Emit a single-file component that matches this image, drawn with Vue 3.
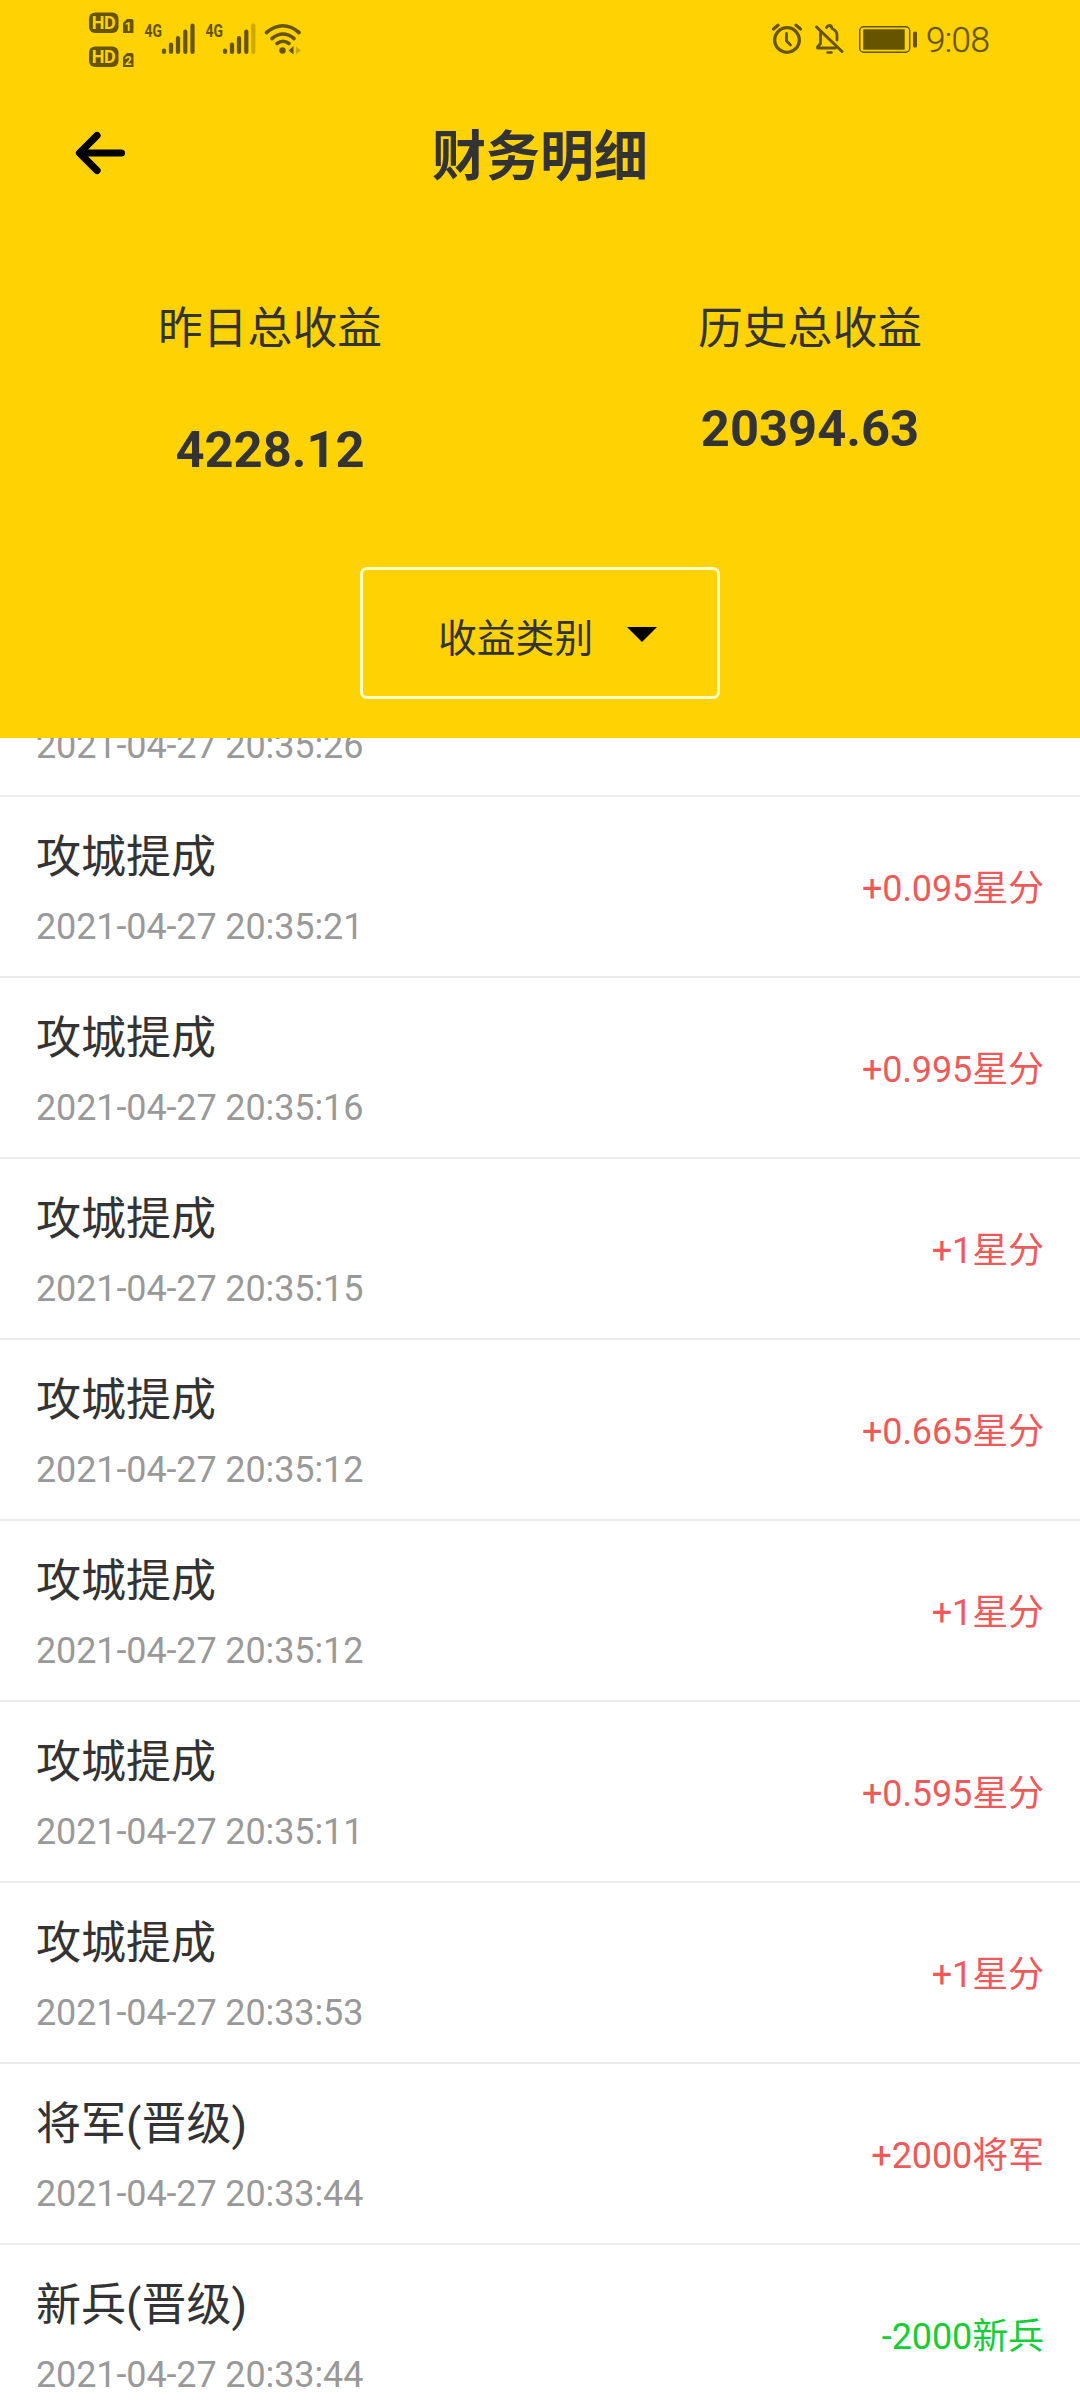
<script setup>
const stats = [
  { label: '昨日总收益', value: '4228.12', low: true },
  { label: '历史总收益', value: '20394.63', low: false },
]

const records = [
  { title: '攻城提成', time: '2021-04-27 20:35:21', amount: '+0.095星分' },
  { title: '攻城提成', time: '2021-04-27 20:35:16', amount: '+0.995星分' },
  { title: '攻城提成', time: '2021-04-27 20:35:15', amount: '+1星分' },
  { title: '攻城提成', time: '2021-04-27 20:35:12', amount: '+0.665星分' },
  { title: '攻城提成', time: '2021-04-27 20:35:12', amount: '+1星分' },
  { title: '攻城提成', time: '2021-04-27 20:35:11', amount: '+0.595星分' },
  { title: '攻城提成', time: '2021-04-27 20:33:53', amount: '+1星分' },
  { title: '将军(晋级)', time: '2021-04-27 20:33:44', amount: '+2000将军' },
  { title: '新兵(晋级)', time: '2021-04-27 20:33:44', amount: '-2000新兵' },
]
</script>

<template>
  <div class="screen">
    <header class="header">
      <div class="status">
        <svg viewBox="0 0 250 80" width="250" height="80">
          <g fill="#665400">
            <rect x="19" y="12.5" width="29.5" height="20.5" rx="6" />
            <path d="M53 23l4-4h4.500q2 0 2 2v12H53z" />
            <rect x="19" y="46.500" width="29.5" height="20.5" rx="6" />
            <path d="M53 57l4-4h4.500q2 0 2 2v12H53z" />
          </g>
          <g class="hd" fill="#ffd204" text-anchor="middle">
            <text x="33.7" y="29.300" textLength="24">HD</text>
            <text x="33.7" y="63.300" textLength="24">HD</text>
            <text x="58.2" y="31" class="sim">1</text>
            <text x="58.200" y="65" class="sim">2</text>
          </g>
          <g class="net" fill="#665400">
            <text x="74.500" y="37" textLength="17.500" lengthAdjust="spacingAndGlyphs">4G</text>
            <text x="135.500" y="37" textLength="17.500" lengthAdjust="spacingAndGlyphs">4G</text>
          </g>
          <g stroke="#665400" stroke-width="4.200" stroke-linecap="round">
            <path d="M94 50.500v1.500M101 44.500v7.500M108 38v14M115.300 31.500v20.500M122.500 25.500v26.500" />
            <path d="M155 50.500v1.500M162 44.500v7.500M169 38v14M176.300 31.500v20.500" />
            <path d="M183.300 25.500v26.500" stroke="#ccaa03" />
          </g>
          <g fill="none" stroke="#665400" stroke-width="3.600" stroke-linecap="round">
            <path d="M196.500 32.500Q213 19 229 32.500" />
            <path d="M202 38.500Q213 29.500 224 38.500" />
            <path d="M207 43.500Q213 39 219 43.500" />
          </g>
          <circle cx="212.500" cy="50.500" r="3.200" fill="#665400" />
          <path d="M223.500 46v8.500l-5-4z" fill="#665400" />
          <path d="M226 46.500v8l5-4z" fill="#ccaa03" />
        </svg>
        <div class="status-right">
          <svg viewBox="0 0 150 80" width="150" height="80">
            <g fill="none" stroke="#665400" stroke-width="3.300" stroke-linecap="round" stroke-linejoin="round">
              <circle cx="17" cy="40" r="12.300" />
              <path d="M3.500 29l4.500-3.700M30.500 29l-4.500-3.700" />
              <path d="M16.500 33.500v7.500l4 4" stroke-width="2.800" />
              <path d="M46.500 27l25.500 24.500" stroke-width="3" />
              <path d="M50.500 33v10.500l-3 3.500v1h18M56.500 27.500q1-2 3-2t2.500 3q5 2 5 7v4.500" stroke-width="2.800" />
              <path d="M57.500 52.500h4" stroke-width="2.500" />
            </g>
            <rect x="89.700" y="26.700" width="50" height="25.600" rx="4" fill="none" stroke="#665400" stroke-width="1.400" />
            <rect x="93.200" y="29.300" width="41.500" height="20.400" fill="#665400" />
            <rect x="143" y="31.500" width="4" height="16" rx="1.500" fill="#665400" />
          </svg>
          <span class="clock">9:08</span>
        </div>
      </div>

      <div class="nav">
        <svg class="back" viewBox="0 0 50 44" width="50" height="44">
          <path d="M22 4.500L4.500 22L22 39.500M6 22H46.500" fill="none" stroke="#000" stroke-width="7.200" stroke-linecap="round" stroke-linejoin="round" />
        </svg>
        <h1>财务明细</h1>
      </div>

      <div class="stats">
        <div v-for="s in stats" :key="s.label" class="stat">
          <div class="label">{{ s.label }}</div>
          <div class="value" :class="{ low: s.low }">{{ s.value }}</div>
        </div>
      </div>

      <button class="filter">
        <span>收益类别</span>
        <svg viewBox="0 0 30 15" width="30" height="15"><path d="M0 0h30L15 15z" /></svg>
      </button>
    </header>

    <main class="list">
      <div class="row partial">
        <div class="time">2021-04-27 20:35:26</div>
      </div>
      <div v-for="(r, i) in records" :key="i" class="row">
        <div class="info">
          <div class="title">{{ r.title }}</div>
          <div class="time">{{ r.time }}</div>
        </div>
        <div class="amount" :class="{ minus: r.amount[0] === '-' }">{{ r.amount }}</div>
      </div>
    </main>
  </div>
</template>

<style>
body {
  margin: 0;
}
</style>

<style scoped>
.screen {
  width: 1080px;
  height: 2400px;
  overflow: hidden;
  display: flex;
  flex-direction: column;
  background: #fff;
  color: #333;
  font-family: Roboto, "Noto Sans CJK SC", sans-serif;
}
.header {
  flex: none;
  height: 738px;
  box-sizing: border-box;
  background: #ffd204;
  display: flex;
  flex-direction: column;
  align-items: center;
}
.status {
  width: 100%;
  height: 80px;
  box-sizing: border-box;
  padding: 0 60px 0 70px;
  display: flex;
  justify-content: space-between;
}
.status-right {
  display: flex;
  width: 250px;
}
.status-right svg {
  flex: none;
}
.hd text {
  font: 700 18px Roboto, sans-serif;
}
.hd .sim {
  font-size: 12px;
}
.net text {
  font: 700 18px Roboto, sans-serif;
}
.clock {
  margin-left: 6px;
  font: 300 35px/82px Roboto, sans-serif;
  letter-spacing: -0.6px;
  color: #665400;
  -webkit-text-stroke: 0.3px #665400;
}
.nav {
  width: 100%;
  height: 150px;
  display: grid;
  grid-template-columns: 200px 1fr 200px;
  align-items: center;
}
.back {
  margin: -4px 0 0 75px;
}
h1 {
  margin: 5px 0 0;
  text-align: center;
  font-size: 54px;
  line-height: 80px;
  font-weight: 700;
}
.stats {
  width: 100%;
  height: 337px;
  display: flex;
}
.stat {
  flex: 1;
  text-align: center;
  padding-top: 69px;
}
.label {
  font-size: 44.8px;
  line-height: 60px;
}
.value {
  margin-top: 39px;
  font-size: 50.7px;
  line-height: 62px;
  font-weight: 700;
}
.value.low {
  margin-top: 60px;
}
.filter {
  width: 360px;
  height: 132px;
  box-sizing: border-box;
  border: 3px solid #ffffc8;
  border-radius: 7px;
  background: none;
  padding: 12px 0 0 75px;
  display: flex;
  align-items: center;
  color: inherit;
  font-family: inherit;
  font-size: 38.8px;
  line-height: 50px;
}
.filter svg {
  margin: -9px 0 0 34px;
}
.list {
  flex: 1;
  min-height: 0;
  overflow: hidden;
}
.row {
  height: 181px;
  box-sizing: border-box;
  border-bottom: 2px solid #ededed;
  padding: 31px 36px 0;
  display: flex;
  justify-content: space-between;
}
.row.partial {
  height: 59px;
  padding-top: 0;
}
.title {
  font-size: 45px;
  line-height: 60px;
}
.time {
  margin-top: 17px;
  font-size: 36px;
  line-height: 44px;
  letter-spacing: -0.12px;
  color: #999;
}
.partial .time {
  margin-top: -14px;
}
.amount {
  margin-top: 39px;
  font-size: 36px;
  line-height: 44px;
  letter-spacing: -0.1px;
  color: #ed5a5a;
}
.amount.minus {
  color: #13ce37;
}
</style>
